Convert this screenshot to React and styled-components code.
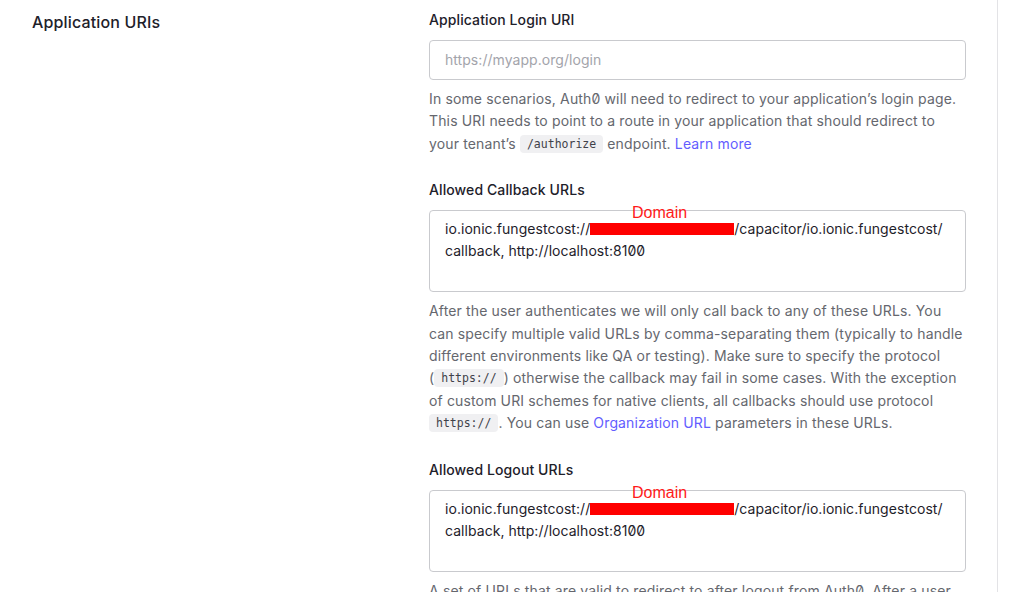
import React from "react";
import styled, { createGlobalStyle } from "styled-components";

const GlobalStyle = createGlobalStyle`
  html, body {
    margin: 0;
    padding: 0;
    background: #ffffff;
  }
  body {
    font-family: Inter, "Noto Sans", sans-serif;
    -webkit-font-smoothing: antialiased;
  }
`;

const Page = styled.div`
  width: 998px;
  min-height: 592px;
  border-right: 1px solid #e3e3e6;
  box-sizing: border-box;
  padding: 10px 32px 40px 32px;
  display: grid;
  grid-template-columns: 365px 537px;
  column-gap: 32px;
  align-items: start;
`;

const SectionTitle = styled.h2`
  margin: 0;
  font-size: 16px;
  line-height: 24px;
  font-weight: 450;
  letter-spacing: 0.15px;
  color: #1e212a;
`;

const Fields = styled.div`
  display: flex;
  flex-direction: column;
  gap: 25px;
`;

const Field = styled.div`
  display: flex;
  flex-direction: column;
`;

const Label = styled.label`
  font-size: 14px;
  line-height: 20px;
  font-weight: 450;
  letter-spacing: 0.1px;
  color: #1e212a;
  margin-bottom: 10px;
`;

const Box = styled.div`
  position: relative;
  box-sizing: border-box;
  height: ${(p) => (p.$multi ? "82px" : "40px")};
  border: 1px solid #c9cace;
  border-radius: 4px;
  padding: ${(p) => (p.$multi ? "7px 15px" : "0 15px")};
  display: flex;
  flex-direction: column;
  justify-content: ${(p) => (p.$multi ? "flex-start" : "center")};
  font-size: 14px;
  line-height: 22px;
  letter-spacing: 0.05px;
  color: ${(p) => (p.$placeholder ? "#a3a4ab" : "#1e212a")};
  font-feature-settings: "zero" 1;
`;

const Line = styled.div`
  white-space: nowrap;
`;

const Redacted = styled.span`
  display: inline-block;
  width: 144px;
  height: 12px;
  background: #ff0000;
  vertical-align: -1px;
`;

const Annotation = styled.span`
  position: absolute;
  left: 202px;
  top: -7px;
  font-family: "Liberation Sans", Arial, sans-serif;
  font-size: 16px;
  line-height: 18px;
  letter-spacing: 0;
  color: #ff1a1a;
  white-space: nowrap;
`;

const Help = styled.p`
  margin: 8px 0 0 0;
  font-size: 14px;
  line-height: 22.4px;
  letter-spacing: 0.14px;
  color: #65676e;
  font-feature-settings: "zero" 1;
`;

const Code = styled.code`
  display: inline-block;
  font-family: "DejaVu Sans Mono", "Liberation Mono", monospace;
  font-size: 11.5px;
  line-height: 18px;
  letter-spacing: 0;
  padding: 0 7px;
  border-radius: 4px;
  background: #f0f0f2;
  color: #3f4149;
  vertical-align: 1px;
`;

const Keep = styled.span`
  white-space: nowrap;
`;

const Link = styled.a`
  color: #635dff;
  text-decoration: none;
`;

const UrlValue = () => (
  <>
    <Line>
      io.ionic.fungestcost://<Redacted />/capacitor/io.ionic.fungestcost/
    </Line>
    <Line>callback, http://localhost:8100</Line>
  </>
);

export default function App() {
  return (
    <>
      <GlobalStyle />
      <Page>
        <SectionTitle>Application URIs</SectionTitle>
        <Fields>
          <Field>
            <Label>Application Login URI</Label>
            <Box $placeholder>https://myapp.org/login</Box>
            <Help>
              In some scenarios, Auth0 will need to redirect to your application’s login page.
              This URI needs to point to a route in your application that should redirect to
              your tenant’s <Code>/authorize</Code> endpoint. <Link href="#">Learn more</Link>
            </Help>
          </Field>
          <Field>
            <Label>Allowed Callback URLs</Label>
            <Box $multi>
              <Annotation>Domain</Annotation>
              <UrlValue />
            </Box>
            <Help>
              After the user authenticates we will only call back to any of these URLs. You
              can specify multiple valid URLs by comma-separating them (typically to handle
              different environments like QA or testing). Make sure to specify the protocol{" "}
              <Keep>
                (<Code>https://</Code>)
              </Keep>{" "}
              otherwise the callback may fail in some cases. With the exception
              of custom URI schemes for native clients, all callbacks should use protocol{" "}
              <Keep>
                <Code>https://</Code>.
              </Keep>{" "}
              You can use <Link href="#">Organization URL</Link> parameters in these URLs.
            </Help>
          </Field>
          <Field>
            <Label>Allowed Logout URLs</Label>
            <Box $multi>
              <Annotation>Domain</Annotation>
              <UrlValue />
            </Box>
            <Help>
              A set of URLs that are valid to redirect to after logout from Auth0. After a user
              logs out from Auth0 you can redirect them with the returnTo query parameter. The
              URL that you use in returnTo must be listed here.
            </Help>
          </Field>
        </Fields>
      </Page>
    </>
  );
}
